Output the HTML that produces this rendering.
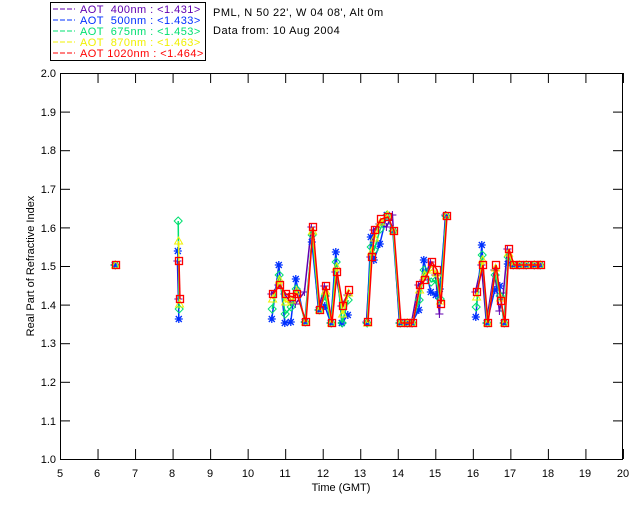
<!DOCTYPE html><html><head><style>body{margin:0;background:#fff}svg{display:block}text{font-family:"Liberation Sans",sans-serif;font-size:11px}.lg text{white-space:pre;letter-spacing:0.45px}</style></head><body>
<svg id="s" width="640" height="512" xmlns="http://www.w3.org/2000/svg">
<rect x="50.5" y="2.5" width="155" height="58" fill="none" stroke="#000"/>
<g class="lg">
<line x1="53" y1="9" x2="75" y2="9" stroke="#6000b0" stroke-dasharray="5,2"/><text x="80" y="13" fill="#6000b0" xml:space="preserve">AOT  400nm : &lt;1.431&gt;</text>
<line x1="53" y1="20" x2="75" y2="20" stroke="#0030ff" stroke-dasharray="5,2"/><text x="80" y="24" fill="#0030ff" xml:space="preserve">AOT  500nm : &lt;1.433&gt;</text>
<line x1="53" y1="31" x2="75" y2="31" stroke="#00e070" stroke-dasharray="5,2"/><text x="80" y="35" fill="#00e070" xml:space="preserve">AOT  675nm : &lt;1.453&gt;</text>
<line x1="53" y1="42" x2="75" y2="42" stroke="#f0f000" stroke-dasharray="5,2"/><text x="80" y="46" fill="#f0f000" xml:space="preserve">AOT  870nm : &lt;1.463&gt;</text>
<line x1="53" y1="53" x2="75" y2="53" stroke="#ff0000" stroke-dasharray="5,2"/><text x="80" y="57" fill="#ff0000" xml:space="preserve">AOT 1020nm : &lt;1.464&gt;</text>
</g>
<text x="213" y="16" letter-spacing="0.5">PML, N 50 22', W 04 08', Alt 0m</text>
<text x="213" y="34" letter-spacing="0.5">Data from: 10 Aug 2004</text>
<rect x="60.5" y="73.5" width="562" height="386" fill="none" stroke="#000"/>
<g id="ticks" stroke="#000"></g>
<g text-anchor="middle">
<text x="60" y="477">5</text><text x="97" y="477">6</text><text x="135" y="477">7</text><text x="172" y="477">8</text><text x="210" y="477">9</text><text x="248" y="477">10</text><text x="285" y="477">11</text><text x="323" y="477">12</text><text x="360" y="477">13</text><text x="398" y="477">14</text><text x="435" y="477">15</text><text x="473" y="477">16</text><text x="510" y="477">17</text><text x="548" y="477">18</text><text x="585" y="477">19</text><text x="623" y="477">20</text>
<text x="341" y="491">Time (GMT)</text>
</g>
<g text-anchor="end">
<text x="56" y="463">1.0</text><text x="56" y="425">1.1</text><text x="56" y="386">1.2</text><text x="56" y="347">1.3</text><text x="56" y="309">1.4</text><text x="56" y="270">1.5</text><text x="56" y="232">1.6</text><text x="56" y="193">1.7</text><text x="56" y="154">1.8</text><text x="56" y="116">1.9</text><text x="56" y="77">2.0</text>
</g>
<text transform="translate(34,266) rotate(-90)" text-anchor="middle">Real Part of Refractive Index</text>
<g id="d"></g>
</svg>
<script>
var t=document.getElementById('ticks'),h='';
for(var i=0;i<=15;i++){var x=60.5+i*37.53;h+='<line x1="'+x+'" y1="73" x2="'+x+'" y2="83"/><line x1="'+x+'" y1="459" x2="'+x+'" y2="449"/>';}
for(var k=0;k<=10;k++){var y=459.5-k*38.6;h+='<line x1="60" y1="'+y+'" x2="70" y2="'+y+'"/><line x1="623" y1="'+y+'" x2="613" y2="'+y+'"/>';}
t.innerHTML=h;
var groups=[
[[116,265]],
[[179,261],[180,299]],
[[273,294],[280,285],[286,294],[292,297],[297,294],[306,322],[313,227],[320,310],[326,286],[332,323],[337,272],[343,306],[349,290]],
[[368,322],[372,257],[375,230],[381,219],[388,217],[394,231],[401,323],[408,323],[413,323],[420,285],[425,280],[432,262],[437,270],[441,304],[447,216]],
[[477,292],[483,265],[488,323],[496,265],[501,301],[505,323],[509,249],[514,265],[520,265],[527,265],[535,265],[541,265]]];
var ser=[['#6000b0',[0,0,0,5,10,-30,0,0,0]],['#0030ff',[25,-20,30,25,-15,0,15,0,20]],['#00e070',[15,-10,20,10,-5,0,8,0,10]],['#f0f000',[5,-5,8,3,-3,0,4,0,5]],['#ff0000',[0]]];
var o='';
ser.forEach(function(s,si){groups.forEach(function(g,gi){var pts=g.map(function(p,j){var dy=si==4?0:s[1][j%s[1].length];if(gi==0)dy=0;if(gi==1){dy=j==0?[0,-10,-40,-20][si]||0:[0,20,10,5][si]||0;}
var y=Math.min(323,Math.max(215,p[1]+dy));if(si<4&&g.length==12&&j>=7)y=265;return [p[0]-(4-si)*0.4,y];});
if(pts.length>1)o+='<polyline fill="none" stroke="'+s[0]+'" stroke-width="1.5" points="'+pts.map(function(p){return p.join(',')}).join(' ')+'"/>';
pts.forEach(function(p){var x=p[0],y=p[1];
if(si==4)o+='<rect x="'+(x-3.5)+'" y="'+(y-3.5)+'" width="7" height="7" fill="none" stroke="#f00" stroke-width="1.3"/>';
else if(si==3)o+='<path d="M'+x+','+(y-4)+'l4,7h-8z" fill="none" stroke="#f0f000"/>';
else if(si==2)o+='<path d="M'+x+','+(y-4)+'l4,4l-4,4l-4,-4z" fill="none" stroke="#00e070"/>';
else if(si==1)o+='<path d="M'+(x-4)+','+y+'h8M'+x+','+(y-4)+'v8M'+(x-3)+','+(y-3)+'l6,6M'+(x+3)+','+(y-3)+'l-6,6" stroke="#0030ff" stroke-width="1.3"/>';
else o+='<path d="M'+(x-4)+','+y+'h8M'+x+','+(y-4)+'v8" stroke="#6000b0"/>';});});});
document.getElementById('d').innerHTML=o;
</script>
</body></html>
